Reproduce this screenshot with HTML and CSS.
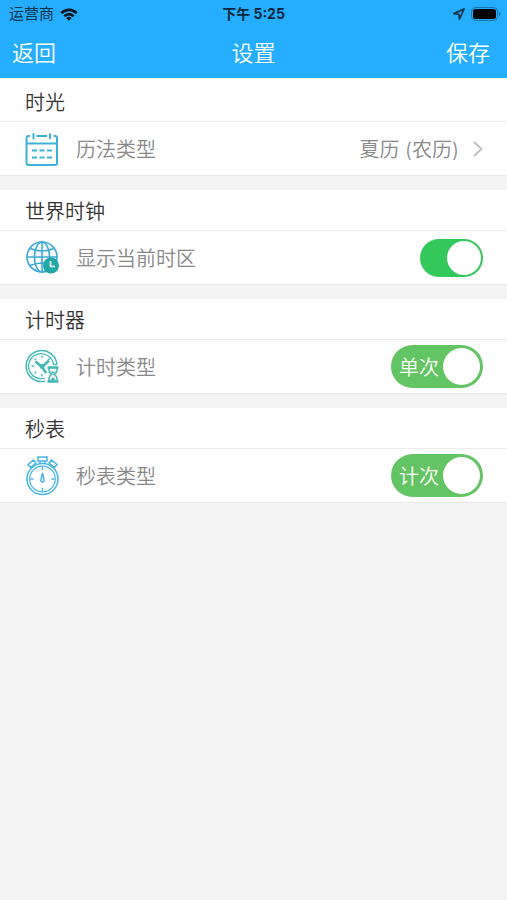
FILE: index.html
```html
<!DOCTYPE html>
<html lang="zh-CN">
<head>
    <meta charset="UTF-8">
    <meta name="viewport" content="width=device-width, initial-scale=1.0">
    <title>设置</title>
    <link rel="stylesheet" href="styles.css">
</head>
<body>
    <header class="header">
        <div class="status-bar">
            <div class="carrier">
                <span>运营商</span>
                <svg width="18" height="13" viewBox="0 0 20 14" fill="none" stroke="#08131c" stroke-width="3">
                    <path d="M1.5 5.5C6.5 0.5 13.5 0.5 18.5 5.5"/>
                    <path d="M4.8 9C8 6 12 6 15.2 9"/>
                    <path d="M7 11a4.3 4.3 0 0 1 6 0L10 14z" fill="#08131c" stroke="none"/>
                </svg>
            </div>
            <div class="time">下午 5:25</div>
            <div class="indicators">
                <svg width="12" height="12" viewBox="0 0 12 12" fill="none" stroke="#10354d" stroke-width="1.8" stroke-linejoin="round">
                    <path d="M11 1L1 5.6L5.8 6.2L6.5 11z"/>
                </svg>
                <svg width="30" height="14" viewBox="0 0 30 14">
                    <rect x="0.5" y="0.5" width="26" height="13" rx="4" fill="none" stroke="#1a75ad"/>
                    <rect x="2" y="2" width="23" height="10" rx="2.5" fill="#000"/>
                    <path d="M28 4.5q3 2.5 0 5z" fill="#1a75ad"/>
                </svg>
            </div>
        </div>
        <nav class="nav-bar">
            <button type="button">返回</button>
            <h1>设置</h1>
            <button type="button">保存</button>
        </nav>
    </header>

    <main>
        <section class="section">
            <h2>时光</h2>
            <div class="row">
                <svg class="icon" viewBox="0 0 36 40" fill="none" stroke="#3eb1d8" stroke-width="2">
                    <path d="M5 7H3.5a2 2 0 0 0-2 2V34a2 2 0 0 0 2 2H30a2 2 0 0 0 2-2V9a2 2 0 0 0-2-2H28.5M11.5 7H22M1.5 14.5H32"/>
                    <path d="M8.5 5V9.5M25 5V9.5" stroke-linecap="round"/>
                    <path d="M7 21.5h5M14.5 21.5h5M22 21.5h5M7 28.5h5M14.5 28.5h5M22 28.5h5"/>
                </svg>
                <span class="label">历法类型</span>
                <button type="button" class="picker">
                    夏历 (农历)
                    <svg width="10" height="16" viewBox="0 0 10 16" fill="none" stroke="#c0c0c0" stroke-width="2">
                        <path d="M1 1L8.5 8L1 15"/>
                    </svg>
                </button>
            </div>
        </section>

        <section class="section">
            <h2>世界时钟</h2>
            <div class="row">
                <svg class="icon" viewBox="0 0 36 40">
                    <g fill="none" stroke="#3ea9d6" stroke-width="1.6">
                        <circle cx="17" cy="19" r="15"/>
                        <ellipse cx="17" cy="19" rx="7.5" ry="15"/>
                        <path d="M17 4V34M2 19H32M5 10.5Q17 15.5 29 10.5M5 27.5Q17 22.5 29 27.5"/>
                    </g>
                    <circle cx="26" cy="27.5" r="8" fill="#1fa8a4"/>
                    <path d="M25.5 23V28.5H30" fill="none" stroke="#fff" stroke-width="1.6"/>
                </svg>
                <label class="label" for="showZone">显示当前时区</label>
                <input type="checkbox" id="showZone" class="switch" checked>
            </div>
        </section>

        <section class="section">
            <h2>计时器</h2>
            <div class="row">
                <svg class="icon" viewBox="0 0 36 40" fill="none" stroke="#42b9b5">
                    <path d="M20 34.2A15.5 15.5 0 1 1 32 17.5" stroke-width="1.5"/>
                    <path d="M20 31A12.5 12.5 0 1 1 28.5 17.5H32" stroke-width="1.3"/>
                    <path d="M17 8.5v2.5M6.5 19h2.5M9.6 11.5l1.5 1.5M24.5 11.5l-1.5 1.5M9.6 26.5l1.5-1.5M17 27v2.5" stroke-width="1.3"/>
                    <path d="M10.5 14.5L17 20L24 13.5M17.5 20.5L21 26" stroke-width="2.5"/>
                    <circle cx="17" cy="19.5" r="2" fill="#42b9b5"/>
                    <path d="M22.5 20.5H33.5M22.5 34.5H33.5" stroke-width="2.5"/>
                    <path d="M24 21v2.5q0 2 2.8 3.8q-2.8 2-2.8 4V34M32 21v2.5q0 2-2.8 3.8q2.8 2 2.8 4V34" stroke-width="1.5"/>
                    <path d="M25.5 24.5h5L28 27zM28 30l3 3.5h-6z" fill="#42b9b5" stroke="none"/>
                </svg>
                <label class="label" for="timerType">计时类型</label>
                <div class="text-switch">
                    <input type="checkbox" id="timerType" checked>
                    <span>单次</span>
                </div>
            </div>
        </section>

        <section class="section">
            <h2>秒表</h2>
            <div class="row">
                <svg class="icon" viewBox="0 0 36 40" fill="none" stroke="#46b5e4" stroke-width="1.5">
                    <circle cx="17.5" cy="23" r="15.5"/>
                    <circle cx="17.5" cy="23" r="12.8" stroke-width="1.2"/>
                    <path d="M13 1H22V5H13zM15 5V8M20 5V8"/>
                    <path d="M3 8.5L8.5 4L11 7L5.5 11.5zM32 8.5L26.5 4L24 7L29.5 11.5z"/>
                    <path d="M17.5 11v3M17.5 32v3M5.5 23h3M26.5 23h3"/>
                    <path d="M17.5 17L19 23.5a1.7 1.7 0 1 1-3 0z"/>
                </svg>
                <label class="label" for="watchType">秒表类型</label>
                <div class="text-switch">
                    <input type="checkbox" id="watchType" checked>
                    <span>计次</span>
                </div>
            </div>
        </section>
    </main>
</body>
</html>
```
FILE: styles.css
```css
* {
    box-sizing: border-box;
}
body {
    margin: 0;
    background-color: #f4f4f4;
    font-family: Inter, "Noto Sans CJK SC", sans-serif;
    font-size: 20px;
    font-weight: 350;
    color: #333;
}
button {
    padding: 0;
    border: none;
    background: none;
    font: inherit;
    color: inherit;
    cursor: pointer;
}
.header {
    background-color: #25aeff;
}
.status-bar {
    display: grid;
    grid-template-columns: 1fr auto 1fr;
    align-items: center;
    height: 28px;
    padding: 0 6px;
    font-size: 15px;
    font-weight: 400;
    line-height: 28px;
    color: #10354d;
}
.carrier,
.indicators {
    display: flex;
    align-items: center;
    gap: 6px;
}
.carrier {
    padding-left: 3px;
}
.indicators {
    justify-content: flex-end;
}
.time {
    font-size: 14px;
    font-weight: 700;
    color: #08263a;
}
.nav-bar {
    display: grid;
    grid-template-columns: 1fr auto 1fr;
    align-items: center;
    height: 50px;
    padding: 0 12px 4px;
    font-size: 22px;
    color: #fff;
}
.nav-bar button:first-child {
    justify-self: start;
}
.nav-bar button:last-child {
    justify-self: end;
    padding-right: 5px;
}
.nav-bar h1 {
    margin: 0;
    font-size: 22px;
    font-weight: 350;
}
main {
    display: flex;
    flex-direction: column;
    gap: 14px;
}
.section {
    background-color: #fff;
    border-bottom: 1px solid #e8e8e8;
}
.section:first-child {
    padding-top: 3px;
}
.section h2 {
    margin: 0;
    padding: 4px 25px 0;
    border-bottom: 1px solid #ececec;
    font-size: 20px;
    font-weight: 350;
    line-height: 36px;
}
.row {
    display: flex;
    align-items: center;
    height: 53px;
    padding: 0 24px 0 25px;
    color: #888;
}
.icon {
    width: 36px;
    height: 40px;
    margin-right: 15px;
}
.label {
    flex: 1;
}
.picker {
    display: flex;
    align-items: center;
    gap: 14px;
}
.switch,
.text-switch input {
    appearance: none;
    display: flex;
    align-items: center;
    margin: 0;
    padding: 2px;
    cursor: pointer;
}
.switch {
    width: 63px;
    height: 38px;
    border-radius: 19px;
    background-color: #ddd;
}
.switch::before,
.text-switch input::before {
    content: "";
    border-radius: 50%;
    background-color: #fff;
}
.switch::before {
    width: 34px;
    height: 34px;
}
.switch:checked {
    justify-content: flex-end;
    background-color: #34c759;
}
.text-switch {
    display: grid;
    align-items: center;
}
.text-switch input,
.text-switch span {
    grid-area: 1 / 1;
}
.text-switch input {
    width: 92px;
    height: 43px;
    padding: 3px;
    border-radius: 22px;
    background-color: #ccc;
}
.text-switch input::before {
    width: 37px;
    height: 37px;
}
.text-switch input:checked {
    justify-content: flex-end;
    background-color: #62c462;
}
.text-switch span {
    padding-left: 8px;
    color: #fff;
    pointer-events: none;
}
```
